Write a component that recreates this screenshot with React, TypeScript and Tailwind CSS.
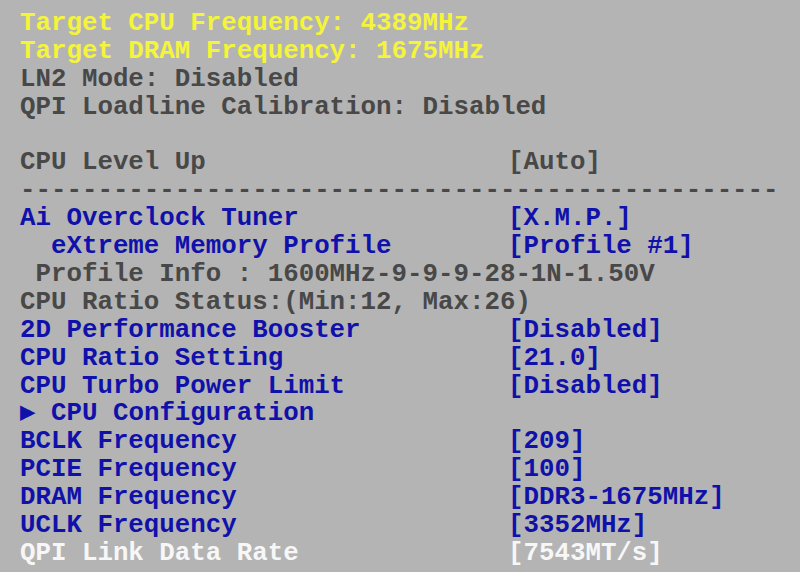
const yellow = "text-[#f4f43a]";
const gray = "text-[#484848]";
const blue = "text-[#1010aa]";
const white = "text-[#f7f7f7]";

type Row = { label: string; value?: string; color: string };

const header: Row[] = [
  { label: "Target CPU Frequency: 4389MHz", color: yellow },
  { label: "Target DRAM Frequency: 1675MHz", color: yellow },
  { label: "LN2 Mode: Disabled", color: gray },
  { label: "QPI Loadline Calibration: Disabled", color: gray },
  { label: "", color: gray },
  { label: "CPU Level Up", value: "[Auto]", color: gray },
  { label: "-".repeat(49), color: gray },
];

const items: Row[] = [
  { label: "Ai Overclock Tuner", value: "[X.M.P.]", color: blue },
  { label: "  eXtreme Memory Profile", value: "[Profile #1]", color: blue },
  { label: " Profile Info : 1600MHz-9-9-9-28-1N-1.50V", color: gray },
  { label: "CPU Ratio Status:(Min:12, Max:26)", color: gray },
  { label: "2D Performance Booster", value: "[Disabled]", color: blue },
  { label: "CPU Ratio Setting", value: "[21.0]", color: blue },
  { label: "CPU Turbo Power Limit", value: "[Disabled]", color: blue },
  { label: "\u25B6 CPU Configuration", color: blue },
  { label: "BCLK Frequency", value: "[209]", color: blue },
  { label: "PCIE Frequency", value: "[100]", color: blue },
  { label: "DRAM Frequency", value: "[DDR3-1675MHz]", color: blue },
  { label: "UCLK Frequency", value: "[3352MHz]", color: blue },
  { label: "QPI Link Data Rate", value: "[7543MT/s]", color: white },
];

function Line({ label, value, color }: Row) {
  return (
    <div className={`grid grid-cols-[488px_1fr] h-[27.9px] ${color}`}>
      <span className="whitespace-pre">{label}</span>
      {value && <span className="whitespace-pre">{value}</span>}
    </div>
  );
}

export default function App() {
  return (
    <div
      className="w-[800px] h-[572px] overflow-hidden bg-[#b4b4b4] pl-5 pt-[10px] font-bold text-[25.8px] leading-[27.9px]"
      style={{ fontFamily: '"Liberation Mono", "DejaVu Sans Mono", monospace' }}
    >
      {header.map((r, i) => (
        <Line key={`h${i}`} {...r} />
      ))}
      {items.map((r, i) => (
        <Line key={`i${i}`} {...r} />
      ))}
    </div>
  );
}
